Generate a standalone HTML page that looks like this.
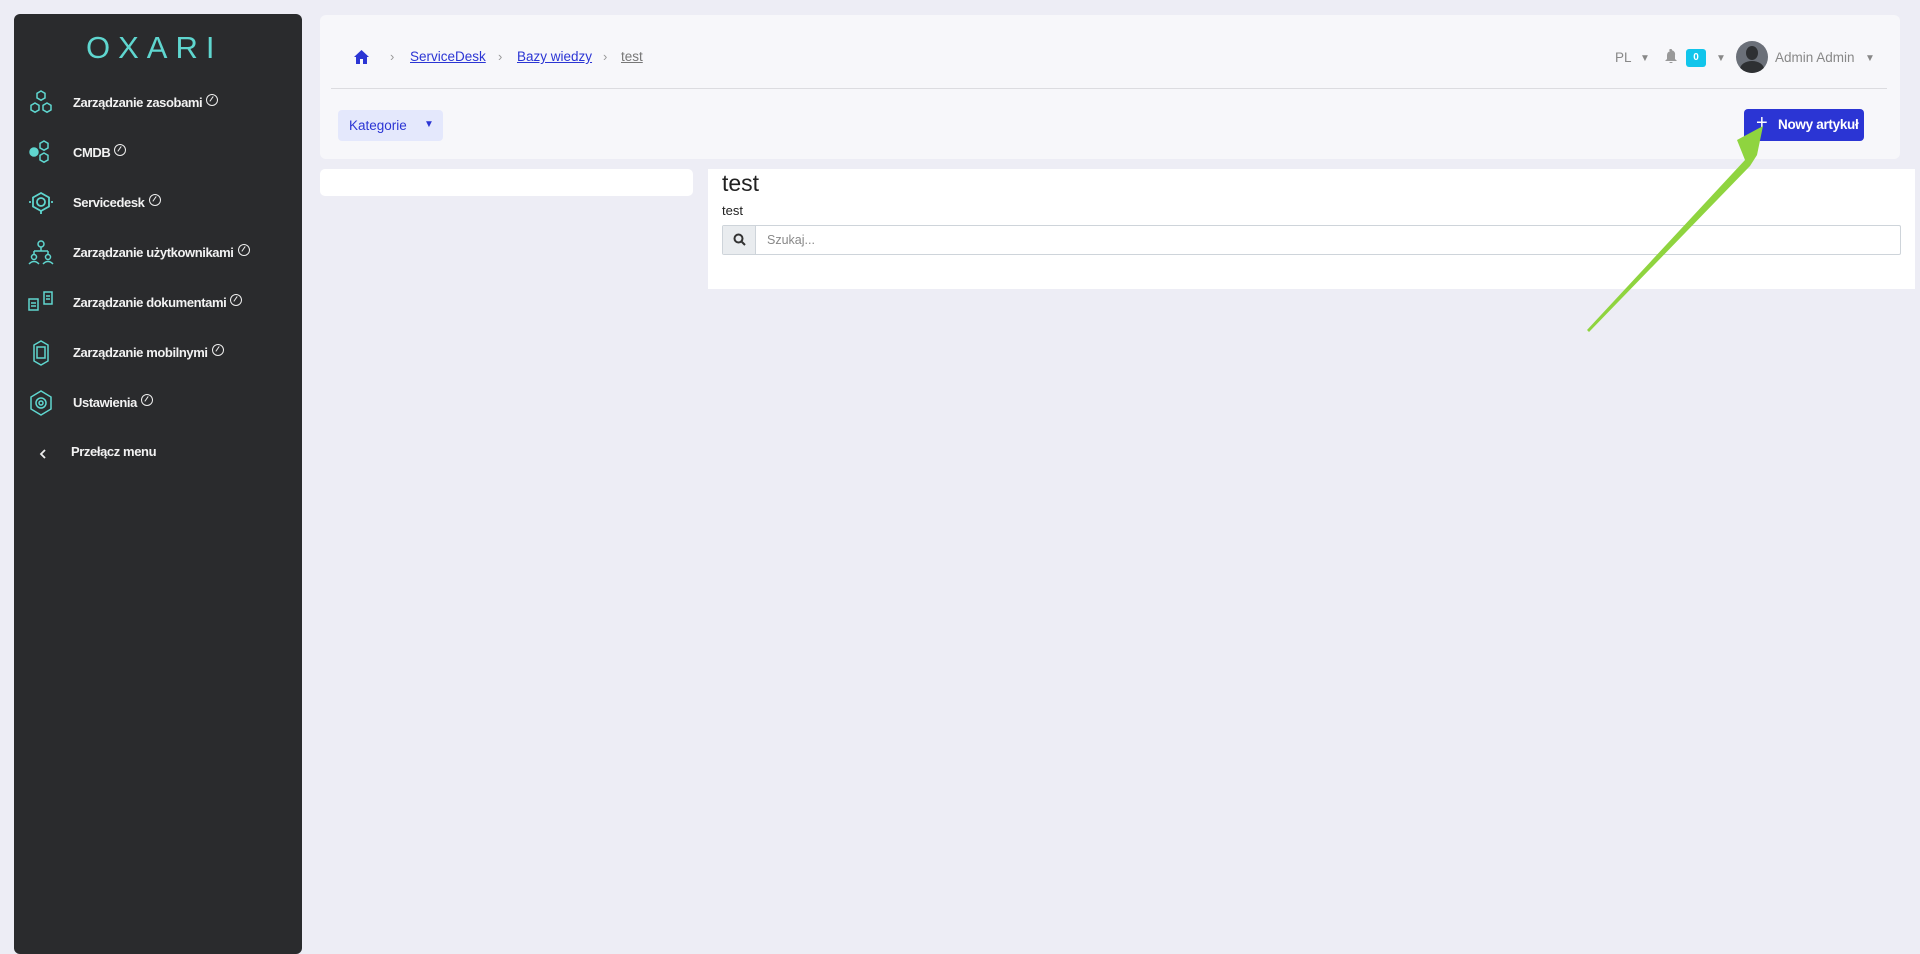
<!DOCTYPE html>
<html><head><meta charset="utf-8"><style>
*{margin:0;padding:0;box-sizing:border-box}
body{width:1920px;height:931px;background:#ededf5;font-family:"Liberation Sans",sans-serif;position:relative;overflow:hidden}
.sb{position:absolute;left:14px;top:14px;width:288px;height:940px;background:#2a2b2d;border-radius:6px}
.logo{position:absolute;left:72px;top:16px;color:#5fd6cf;font-size:31px;letter-spacing:8px;font-weight:400}
.it{position:absolute;left:0;width:288px;height:40px}
.it svg{position:absolute;left:14px;top:8px}
.it span{position:absolute;left:59px;top:12px;color:#f2f2f2;font-size:13px;font-weight:bold;letter-spacing:-0.4px}
.it span i{font-style:normal;display:inline-block;width:12px;height:12px;border:1.3px solid #eee;border-radius:50%;margin-left:4px;vertical-align:1px;position:relative}
.it span i:after{content:"";position:absolute;left:4px;top:1px;width:1.3px;height:6px;background:#eee;transform:rotate(35deg)}
.hd{position:absolute;left:320px;top:15px;width:1580px;height:144px;background:#f7f7fa;border-radius:6px}
.bc{position:absolute;top:34px;font-size:13.5px}
.bc a{color:#2b35d4;text-decoration:underline}
.sep{color:#999;font-size:13px}
.hr{position:absolute;left:11px;right:13px;top:73px;height:1px;background:#dcdce0}
.kat{position:absolute;left:18px;top:95px;width:105px;height:31px;background:#e4e8fc;border-radius:4px;color:#2b35d4;font-size:13.5px;padding:8px 0 0 11px}
.btn{position:absolute;left:1424px;top:94px;width:120px;height:32px;background:#2b35d4;border-radius:4px;color:#fff;font-size:13.5px;font-weight:bold;padding:8px 0 0 34px;letter-spacing:-0.3px}
.gr{color:#888;font-size:13.5px;position:absolute}
.lp{position:absolute;left:320px;top:169px;width:373px;height:27px;background:#fff;border-radius:5px}
.rp{position:absolute;left:708px;top:169px;width:1207px;height:120px;background:#fff}
</style></head><body>
<div class="sb">
<div class="logo">OXARI</div>
<div class="it" style="top:68px"><svg width="26" height="26" viewBox="0 0 26 26" fill="none" stroke="#5fd6cf" stroke-width="1.5"><path d="M13 1l4 2.3v4.6L13 10.2 9 7.9V3.3z M7 13l4 2.3v4.6L7 22.2 3 19.9v-4.6z M19 13l4 2.3v4.6L19 22.2 15 19.9v-4.6z"/></svg><span>Zarządzanie zasobami<i></i></span></div>
<div class="it" style="top:118px"><svg width="26" height="26" viewBox="0 0 26 26" fill="none" stroke="#5fd6cf" stroke-width="1.5"><circle cx="6" cy="12" r="4" fill="#5fd6cf"/><path d="M16 1l4 2.3v4.6L16 10.2 12 7.9V3.3z M16 13l4 2.3v4.6L16 22.2 12 19.9v-4.6z"/></svg><span>CMDB<i></i></span></div>
<div class="it" style="top:168px"><svg width="26" height="26" viewBox="0 0 26 26" fill="none" stroke="#5fd6cf" stroke-width="1.8"><path d="M13 3l8 4.5v9L13 21l-8-4.5v-9z"/><circle cx="13" cy="12" r="4"/><path d="M3 12l-2 0 M23 12h2 M13 21v3"/></svg><span>Servicedesk<i></i></span></div>
<div class="it" style="top:218px"><svg width="26" height="26" viewBox="0 0 26 26" fill="none" stroke="#5fd6cf" stroke-width="1.5"><circle cx="13" cy="4" r="3"/><path d="M13 7v4M6 11h14M6 11v3M20 11v3"/><circle cx="6" cy="17" r="2.5"/><circle cx="20" cy="17" r="2.5"/><path d="M1 24q5-5 10 0M15 24q5-5 10 0"/></svg><span>Zarządzanie użytkownikami<i></i></span></div>
<div class="it" style="top:268px"><svg width="26" height="26" viewBox="0 0 26 26" fill="none" stroke="#5fd6cf" stroke-width="1.5"><path d="M1 9h9v11H1z M3 13h5M3 16h5 M16 2h8v12h-8z M18 6h4M18 9h4"/></svg><span>Zarządzanie dokumentami<i></i></span></div>
<div class="it" style="top:318px"><svg width="26" height="26" viewBox="0 0 26 26" fill="none" stroke="#5fd6cf" stroke-width="1.5"><path d="M13 1l7 4v16l-7 4-7-4V5z"/><rect x="9" y="7" width="8" height="11"/></svg><span>Zarządzanie mobilnymi<i></i></span></div>
<div class="it" style="top:368px"><svg width="26" height="26" viewBox="0 0 26 26" fill="none" stroke="#5fd6cf" stroke-width="1.5"><path d="M13 1l10 6v12l-10 6-10-6V7z"/><circle cx="13" cy="13" r="5"/><circle cx="13" cy="13" r="2"/></svg><span>Ustawienia<i></i></span></div>
<div class="it" style="top:418px"><svg width="26" height="26" viewBox="0 0 26 26" fill="none" stroke="#eee" stroke-width="1.8"><path d="M17 10l-4 4 4 4"/></svg><span style="left:57px;top:12px">Przełącz menu</span></div>
</div>
<div class="hd">
<svg style="position:absolute;left:34px;top:35px" width="15" height="14" viewBox="0 0 15 14"><path d="M7.5 0L0 7h2v7h4V9h3v5h4V7h2z" fill="#2b35d4"/></svg>
<div class="bc" style="left:70px"><span class="sep">›</span></div>
<div class="bc" style="left:90px"><a>ServiceDesk</a></div>
<div class="bc" style="left:178px"><span class="sep">›</span></div>
<div class="bc" style="left:197px"><a>Bazy wiedzy</a></div>
<div class="bc" style="left:283px"><span class="sep">›</span></div>
<div class="bc" style="left:301px"><a style="color:#777">test</a></div>
<div class="gr" style="left:1295px;top:35px">PL</div>
<div class="gr" style="left:1320px;top:38px;font-size:10px">▼</div>
<svg style="position:absolute;left:1345px;top:34px" width="12" height="14" viewBox="0 0 12 14"><path d="M6 0a1 1 0 011 1.2A4 4 0 0110 6v4l2 2H0l2-2V6a4 4 0 013-3.8A1 1 0 016 0zM4.5 13h3a1.5 1.5 0 01-3 0z" fill="#999"/></svg>
<div style="position:absolute;left:1366px;top:34px;width:20px;height:18px;background:#11c5eb;border-radius:3px;color:#fff;font-size:10px;font-weight:bold;text-align:center;line-height:18px">0</div>
<div class="gr" style="left:1396px;top:38px;font-size:10px">▼</div>
<div style="position:absolute;left:1416px;top:26px;width:32px;height:32px;border-radius:50%;background:#6b7079;overflow:hidden"><div style="position:absolute;left:10px;top:5px;width:12px;height:14px;border-radius:50%;background:#2e3033"></div><div style="position:absolute;left:4px;top:20px;width:24px;height:16px;border-radius:50% 50% 0 0;background:#2e3033"></div></div>
<div class="gr" style="left:1455px;top:35px">Admin Admin</div>
<div class="gr" style="left:1545px;top:38px;font-size:10px">▼</div>
<div class="hr"></div>
<div class="kat">Kategorie<span style="position:absolute;left:86px;top:9px;font-size:10px">▼</span></div>
<div class="btn"><span style="position:absolute;left:12px;top:3px;font-size:20px;font-weight:normal">+</span>Nowy artykuł</div>
</div>
<div class="lp"></div>
<div class="rp">
<div style="position:absolute;left:14px;top:1px;font-size:23px;color:#222">test</div>
<div style="position:absolute;left:14px;top:34px;font-size:13px;color:#222">test</div>
<div style="position:absolute;left:14px;top:56px;width:1179px;height:30px;border:1px solid #ced4da;border-radius:2px">
<div style="position:absolute;left:0;top:0;width:33px;height:28px;background:#e9ecef;border-right:1px solid #ced4da"><svg style="position:absolute;left:10px;top:7px" width="13" height="13" viewBox="0 0 13 13" fill="none" stroke="#333" stroke-width="2"><circle cx="5.5" cy="5.5" r="4"/><path d="M8.5 8.5l3.5 3.5"/></svg></div>
<div style="position:absolute;left:44px;top:7px;font-size:12.5px;color:#888">Szukaj...</div>
</div>
</div>
<svg style="position:absolute;left:0;top:0" width="1920" height="931"><polygon points="1587,330 1745,160 1737,140 1763,126 1757,155 1750,166 1589,332" fill="#8fd43f"/></svg>
</body></html>
